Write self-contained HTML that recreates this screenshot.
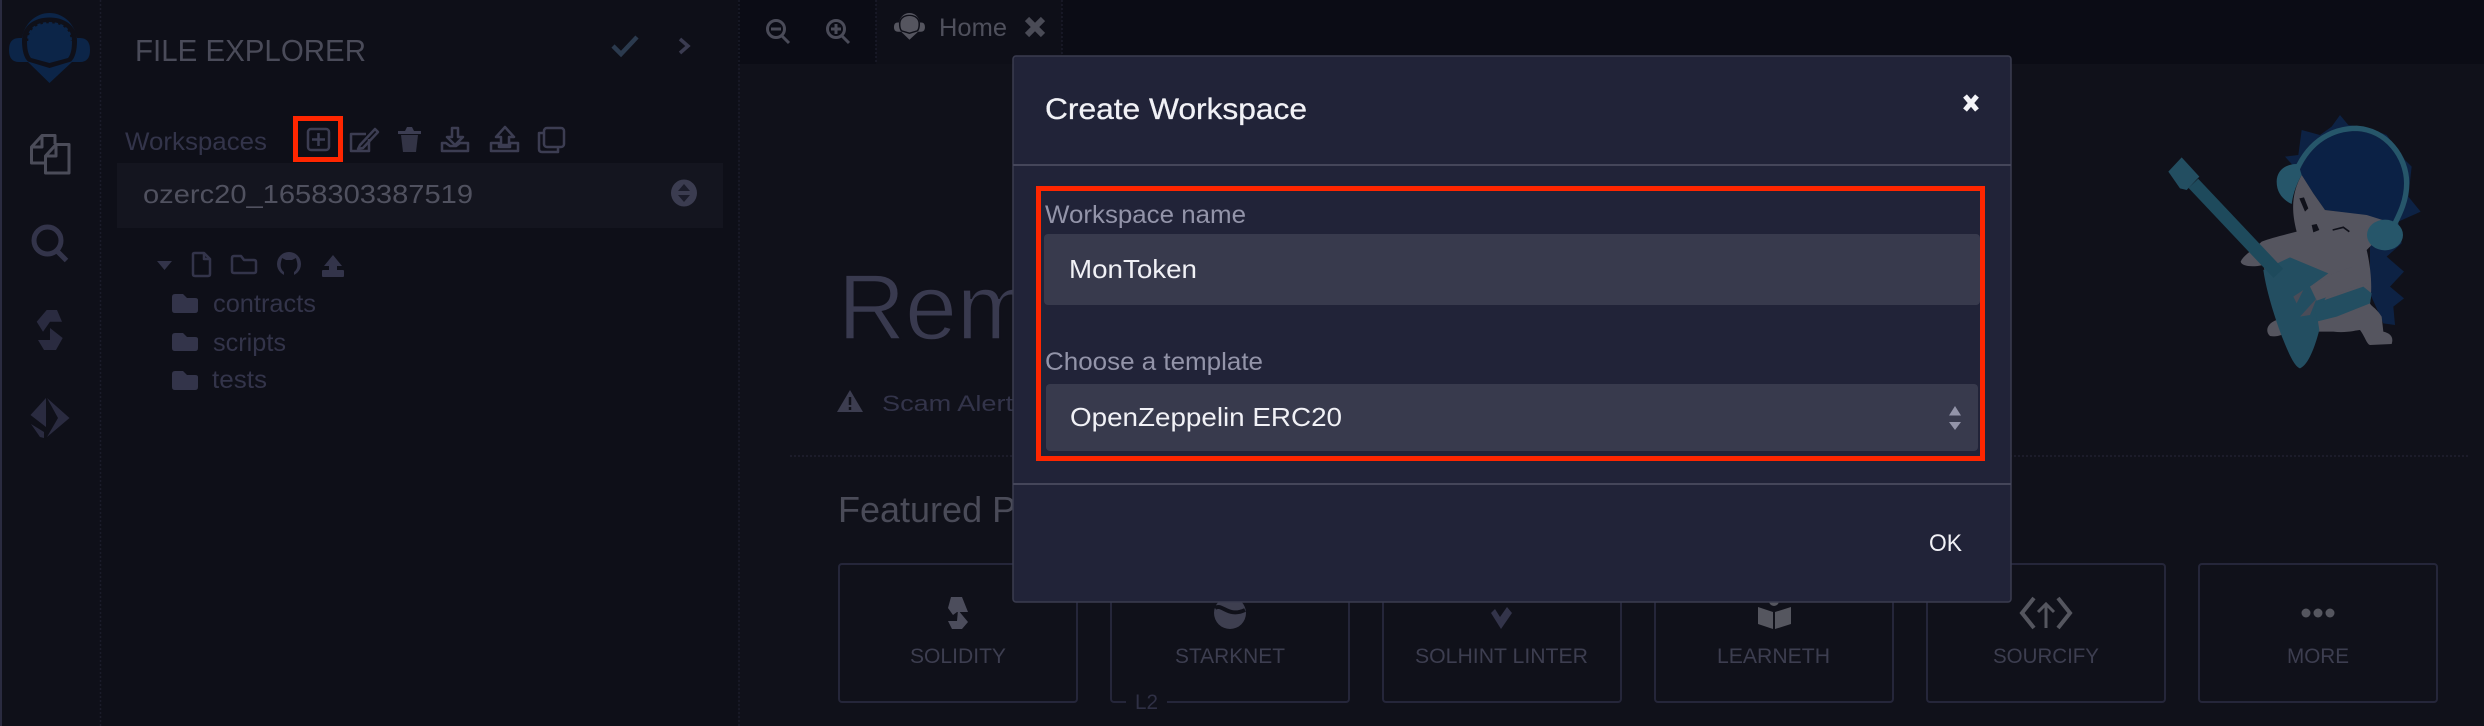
<!DOCTYPE html>
<html lang="en">
<head>
<meta charset="utf-8">
<title>Create Workspace</title>
<style>
html,body{margin:0;padding:0;background:#10111a;width:2484px;height:726px;overflow:hidden}
svg{display:block}
text{font-family:"Liberation Sans",sans-serif}
</style>
</head>
<body>
<svg width="2484" height="726" viewBox="0 0 2484 726" xmlns="http://www.w3.org/2000/svg">
<!-- backgrounds -->
<rect width="2484" height="726" fill="#10111a"/>
<rect x="0" y="0" width="100" height="726" fill="#0f1019"/>
<rect x="0" y="0" width="2" height="726" fill="#2a2b40"/>
<rect x="100" y="0" width="638" height="726" fill="#0e0f18"/>
<rect x="738" y="0" width="1746" height="64" fill="#0b0c15"/>
<rect x="876" y="0" width="186" height="64" fill="#0e0f18"/>
<g stroke="#1b1c2a" stroke-width="1.5" stroke-dasharray="2 2">
<line x1="100.500" y1="0" x2="100.500" y2="726"/>
<line x1="739" y1="0" x2="739" y2="726"/>
<line x1="876" y1="0" x2="876" y2="62"/>
<line x1="1062" y1="0" x2="1062" y2="55"/>
</g>

<!-- logo -->
<path fill="#0c2548" d="M9 50Q9 38 19 38H22C25 22 37 13 49.500 13C62 13 74 22 77 38H80Q90 38 90 50Q90 62 80 62H72L49.500 83L28 62H19Q9 62 9 50Z"/>
<path fill="#0f1019" d="M22 41C22 25 35 17.500 49.500 17.500C64 17.500 77 25 77 41C77 50 75 58 71 61.500L49.500 68L28 61.500C24 58 22 50 22 41Z"/>
<path fill="#0c2548" d="M27 41C27 28 37 22 49.500 22C62 22 72 28 72 41C72 49 71 54 68 58L49.500 63L31 58C28 54 27 49 27 41Z"/>
<path fill="none" stroke="#0f1019" stroke-width="2.500" stroke-dasharray="2.500 3.500" d="M27 41C27 28 37 22 49.500 22C62 22 72 28 72 41"/>

<!-- side icons -->
<g fill="none" stroke="#4b4c59" stroke-width="3" stroke-linejoin="round">
<path d="M44 163H31.500V147L42 135.500H55V144"/>
<path d="M42 136V147H31.500"/>
<path d="M45.500 173V156L56 144.500H69V173Z"/>
<path d="M56 145V156H45.500"/>
</g>
<circle cx="47.500" cy="240.500" r="13.500" fill="none" stroke="#33344a" stroke-width="5"/>
<path d="M57 251L66.500 260.500" stroke="#33344a" stroke-width="5" fill="none"/>
<g fill="#2a2b40">
<path d="M46.700 310H57L62 321.700H50L43 331.700L36.700 321.700Z"/>
<path d="M50 328L62.700 338L56 350H44L38 340H50Z"/>
<path d="M46 398L30.500 415L46 427Z"/>
<path d="M47 398L69.500 418L47 437L58 418Z"/>
<path d="M31 424L44 432V438L40 437Z"/>
</g>

<!-- explorer header -->
<text x="135" y="61" font-size="31" fill="#4a4b59" textLength="231" lengthAdjust="spacingAndGlyphs">FILE EXPLORER</text>
<path d="M613 46L621 54L637 37" fill="none" stroke="#2b3a4e" stroke-width="4.500"/>
<path d="M680 39L688 46L680 53" fill="none" stroke="#3a3b50" stroke-width="3.500"/>

<text x="125" y="150" font-size="25" fill="#33344a" textLength="142" lengthAdjust="spacingAndGlyphs">Workspaces</text>
<rect x="295.500" y="118.500" width="45" height="41" fill="none" stroke="#ff2600" stroke-width="5"/>
<g fill="none" stroke="#3c3d52" stroke-width="2.500" stroke-linejoin="round">
<rect x="308" y="129" width="21" height="21" rx="3"/>
<path d="M318.500 133V146M312 139.500H325"/>
<path d="M366 134H351V151H369V139"/>
<path d="M360 145L375 129L378 132L363 148L358 149Z"/>
<path d="M442 143V151H468V143H460L456 146H450L446 143Z"/>
<path d="M452 128H458V137H463L455 145L447 137H452Z"/>
<path d="M491 143V151H518V143H510V147H499V143Z"/>
<path d="M505 127L514 137H509V145H501V137H496Z"/>
<rect x="544" y="128" width="20" height="19" rx="3"/>
<path d="M544 133H539V149Q539 152 542 152H558V147"/>
</g>
<path d="M398 131H421V134H398ZM405 131L407 127H412L414 131Z" fill="#3c3d52"/>
<path d="M401 135H418L416 152H403Z" fill="#333446"/>

<rect x="117" y="163" width="606" height="65" fill="#14151f"/>
<text x="143" y="203" font-size="26" fill="#50515f" textLength="330" lengthAdjust="spacingAndGlyphs">ozerc20_1658303387519</text>
<ellipse cx="684" cy="193" rx="13" ry="13.500" fill="#3b3c50"/>
<path d="M678 191L684 184L690 191ZM678 195L684 202L690 195Z" fill="#1b1c2a"/>

<!-- tree -->
<path d="M157 261H172L164.500 270Z" fill="#33344a"/>
<g fill="none" stroke="#33344a" stroke-width="2.500" stroke-linejoin="round">
<path d="M193 254Q193 253 195 253H204L210 259V274Q210 276 208 276H195Q193 276 193 274Z"/>
<path d="M204 253V259H210"/>
<path d="M232 258Q232 256 234 256H241L244 260H254Q256 260 256 262V271Q256 273 254 273H234Q232 273 232 271Z"/>
</g>
<circle cx="289" cy="264" r="12" fill="#33344a"/>
<path d="M284 277V272C281 270 280 266 281 262L282 258L286 260H292L296 258L297 262C298 266 297 270 294 272V277Z" fill="#0e0f18"/>
<path d="M333 255L342 266H337V274H329V266H324Z" fill="#33344a"/>
<rect x="322" y="270" width="22" height="7" rx="1" fill="#33344a"/>
<g fill="#33344a">
<path d="M172 297Q172 294 175 294H183L187 298H195Q198 298 198 300V310Q198 313 195 313H175Q172 313 172 310Z"/>
<path d="M172 336Q172 333 175 333H183L187 337H195Q198 337 198 339V348Q198 351 195 351H175Q172 351 172 348Z"/>
<path d="M172 374Q172 371 175 371H183L187 375H195Q198 375 198 377V387Q198 390 195 390H175Q172 390 172 387Z"/>
</g>
<g font-size="25" fill="#33344a">
<text x="213" y="312" textLength="103" lengthAdjust="spacingAndGlyphs">contracts</text>
<text x="213" y="351" textLength="73" lengthAdjust="spacingAndGlyphs">scripts</text>
<text x="212" y="388" textLength="55" lengthAdjust="spacingAndGlyphs">tests</text>
</g>

<!-- tab bar -->
<g fill="none" stroke="#4a4b58" stroke-width="3">
<circle cx="776" cy="29" r="8.500"/><path d="M782 36L789 43M771 29H781"/>
<circle cx="836" cy="29" r="8.500"/><path d="M842 36L849 43M831 29H841M836 24V34"/>
</g>
<g transform="translate(890.500 8) scale(.383)">
<path fill="#55555f" d="M9 50Q9 38 19 38H22C25 22 37 13 49.500 13C62 13 74 22 77 38H80Q90 38 90 50Q90 62 80 62H72L49.500 83L28 62H19Q9 62 9 50Z"/>
<path fill="#0e0f18" d="M22 41C22 25 35 17.500 49.500 17.500C64 17.500 77 25 77 41C77 50 75 58 71 61.500L49.500 68L28 61.500C24 58 22 50 22 41Z"/>
<path fill="#55555f" d="M26 41C26 28 37 21 49.500 21C62 21 73 28 73 41C73 49 72 54 69 58L49.500 64L30 58C27 54 26 49 26 41Z"/>
</g>
<text x="939" y="36" font-size="25" fill="#4f505c" textLength="68" lengthAdjust="spacingAndGlyphs">Home</text>
<path d="M1027 19L1043 35M1043 19L1027 35" stroke="#4a4b56" stroke-width="6" fill="none"/>

<!-- home -->
<text x="838" y="339" font-size="93" fill="#393a4f" stroke="#10111a" stroke-width="1.500">Remix IDE</text>
<path d="M850 390L863 412H837Z" fill="#3c3d50"/>
<path d="M850 397V405M850 407V410" stroke="#10111a" stroke-width="2.500" fill="none"/>
<text x="882" y="411" font-size="22" fill="#33344a" textLength="131" lengthAdjust="spacingAndGlyphs">Scam Alert</text>
<line x1="790" y1="456" x2="2469" y2="456" stroke="#20212f" stroke-width="1.500" stroke-dasharray="2 2"/>
<text x="838" y="522" font-size="36" fill="#4a4b58">Featured Plugins</text>

<g fill="none" stroke="#25263a" stroke-width="2">
<rect x="839" y="564" width="238" height="138" rx="3"/>
<rect x="1111" y="564" width="238" height="138" rx="3"/>
<rect x="1383" y="564" width="238" height="138" rx="3"/>
<rect x="1655" y="564" width="238" height="138" rx="3"/>
<rect x="1927" y="564" width="238" height="138" rx="3"/>
<rect x="2199" y="564" width="238" height="138" rx="3"/>
</g>
<rect x="1126" y="698" width="41" height="8" fill="#10111a"/>
<text x="1135" y="709" font-size="21" fill="#2f3045" textLength="23" lengthAdjust="spacingAndGlyphs">L2</text>

<g font-size="21" fill="#3d3e50">
<text x="910" y="663" textLength="96" lengthAdjust="spacingAndGlyphs">SOLIDITY</text>
<text x="1175" y="663" textLength="110" lengthAdjust="spacingAndGlyphs">STARKNET</text>
<text x="1415" y="663" textLength="173" lengthAdjust="spacingAndGlyphs">SOLHINT LINTER</text>
<text x="1717" y="663" textLength="113" lengthAdjust="spacingAndGlyphs">LEARNETH</text>
<text x="1993" y="663" textLength="106" lengthAdjust="spacingAndGlyphs">SOURCIFY</text>
<text x="2287" y="663" textLength="62" lengthAdjust="spacingAndGlyphs">MORE</text>
</g>
<!-- plugin icons -->
<g fill="#4c4d5c">
<path d="M951 597H962L968 612H957L953 615L948 608Z"/>
<path d="M958 610L968 622L962 629H952L948 621H957Z"/>
</g>
<circle cx="1230" cy="613" r="16" fill="#3e3f50"/>
<path d="M1215 608C1222 603 1228 618 1245 610" fill="none" stroke="#10111a" stroke-width="4"/>
<path d="M1491 613L1501 629L1512 613L1507 607L1500 617L1495 609Z" fill="#33344a"/>
<path d="M1758 607L1773 612V629L1758 624ZM1775 612L1791 607V624L1775 629Z" fill="#55565f"/>
<circle cx="1774" cy="601" r="5" fill="#55565f"/>
<g fill="none" stroke="#55565f" stroke-width="4">
<path d="M2034 598L2022 613L2034 628M2058 598L2070 613L2058 628"/>
<path d="M2046 628V605M2038 612L2046 604L2054 612" stroke-width="3"/>
</g>
<g fill="#55565f">
<circle cx="2306" cy="613" r="4.500"/><circle cx="2318" cy="613" r="4.500"/><circle cx="2330" cy="613" r="4.500"/>
</g>

<!-- mascot -->
<g transform="translate(2000 60) scale(.33333)">
<path fill="#0d2244" d="M1020 165L1045 195L1110 205L1160 225L1215 300L1235 320L1225 410L1262 455L1195 485L1205 550L1160 590L1212 635L1170 680L1212 715L1180 740L1185 795L1150 790L1110 700L1110 560L900 340L855 290L895 285L905 210L960 225L995 200Z"/>
<path fill="#0b2145" d="M900 340C930 260 990 215 1060 215C1150 220 1215 290 1215 370C1215 420 1200 460 1180 490L1100 465L975 450L940 400Z"/>
<path fill="none" stroke="#26566a" stroke-width="16" d="M890 330C930 240 1000 205 1070 205C1160 210 1220 290 1220 370C1220 420 1200 460 1185 490"/>
<path fill="#26566a" d="M830 365C830 330 860 310 895 312L905 345C885 380 878 410 875 432C850 420 830 400 830 365Z"/>
<path fill="#55555f" d="M905 345C880 390 870 440 890 515C850 525 810 535 785 545C760 570 730 585 722 605C725 620 760 622 790 615L830 780C800 790 795 815 810 828C830 832 850 825 860 815L1000 815C1040 820 1070 810 1080 810C1095 830 1100 852 1110 855L1175 852C1182 830 1170 820 1150 815L1145 770C1130 745 1115 740 1110 730C1118 680 1112 620 1100 570L1180 490L1100 465L975 450L940 400Z"/>
<ellipse cx="1155" cy="525" rx="54" ry="46" fill="#26566a"/>
<path fill="#234e61" d="M790 630C800 700 830 790 850 840C870 890 885 920 900 925C925 915 945 860 958 810L950 760L985 700L930 680L985 640L870 592Z"/>
<path fill="#234e61" d="M945 730L1090 680L1115 700L1110 730L1010 770L950 785Z"/>
<path fill="#55555f" d="M930 680L1000 640L1060 620L1100 670L950 722Z"/>
<path fill="#4a4c58" d="M880 710L910 690L890 730ZM900 770L950 715L930 765Z"/>
<path fill="#234e61" d="M505 335L545 292L598 350L560 390L540 385Z"/>
<path fill="none" stroke="#1e4a5c" stroke-width="40" d="M580 370L835 640"/>
<path fill="#10111a" d="M898 415L912 412L925 445L915 455ZM935 495L950 492L958 510L940 517Z"/>
<path fill="none" stroke="#10111a" stroke-width="5" d="M998 510L1030 502L1048 515"/>
</g>

<!-- modal -->
<rect x="1013" y="56" width="998" height="546" rx="3" fill="#212338" stroke="#3a3c4f" stroke-width="1.500"/>
<line x1="1013" y1="165" x2="2011" y2="165" stroke="#45465a" stroke-width="2"/>
<line x1="1013" y1="484" x2="2011" y2="484" stroke="#45465a" stroke-width="2"/>
<text x="1045" y="119" font-size="30" fill="#f1f1f6" stroke="#f1f1f6" stroke-width=".3" textLength="262" lengthAdjust="spacingAndGlyphs">Create Workspace</text>
<path d="M1965 96L1977 110M1977 96L1965 110" stroke="#f4f4f8" stroke-width="5" fill="none"/>

<rect x="1044" y="234" width="936" height="71" rx="4" fill="#383a4d"/>
<rect x="1046" y="384" width="932" height="67" rx="4" fill="#383a4d"/>
<text x="1045" y="223" font-size="25" fill="#9394a9" textLength="201" lengthAdjust="spacingAndGlyphs">Workspace name</text>
<text x="1069" y="278" font-size="26" fill="#f1f1f6" textLength="128" lengthAdjust="spacingAndGlyphs">MonToken</text>
<text x="1045" y="370" font-size="25" fill="#9394a9" textLength="218" lengthAdjust="spacingAndGlyphs">Choose a template</text>
<text x="1070" y="426" font-size="26" fill="#f1f1f6" textLength="272" lengthAdjust="spacingAndGlyphs">OpenZeppelin ERC20</text>
<path d="M1949 415.500L1955 406L1961 415.500ZM1949 422L1955 430L1961 422Z" fill="#9394a9"/>
<rect x="1038.500" y="188.500" width="944" height="270" fill="none" stroke="#ff2600" stroke-width="5"/>
<text x="1929" y="551" font-size="24" fill="#f1f1f6" textLength="33" lengthAdjust="spacingAndGlyphs">OK</text>
</svg>
</body>
</html>
